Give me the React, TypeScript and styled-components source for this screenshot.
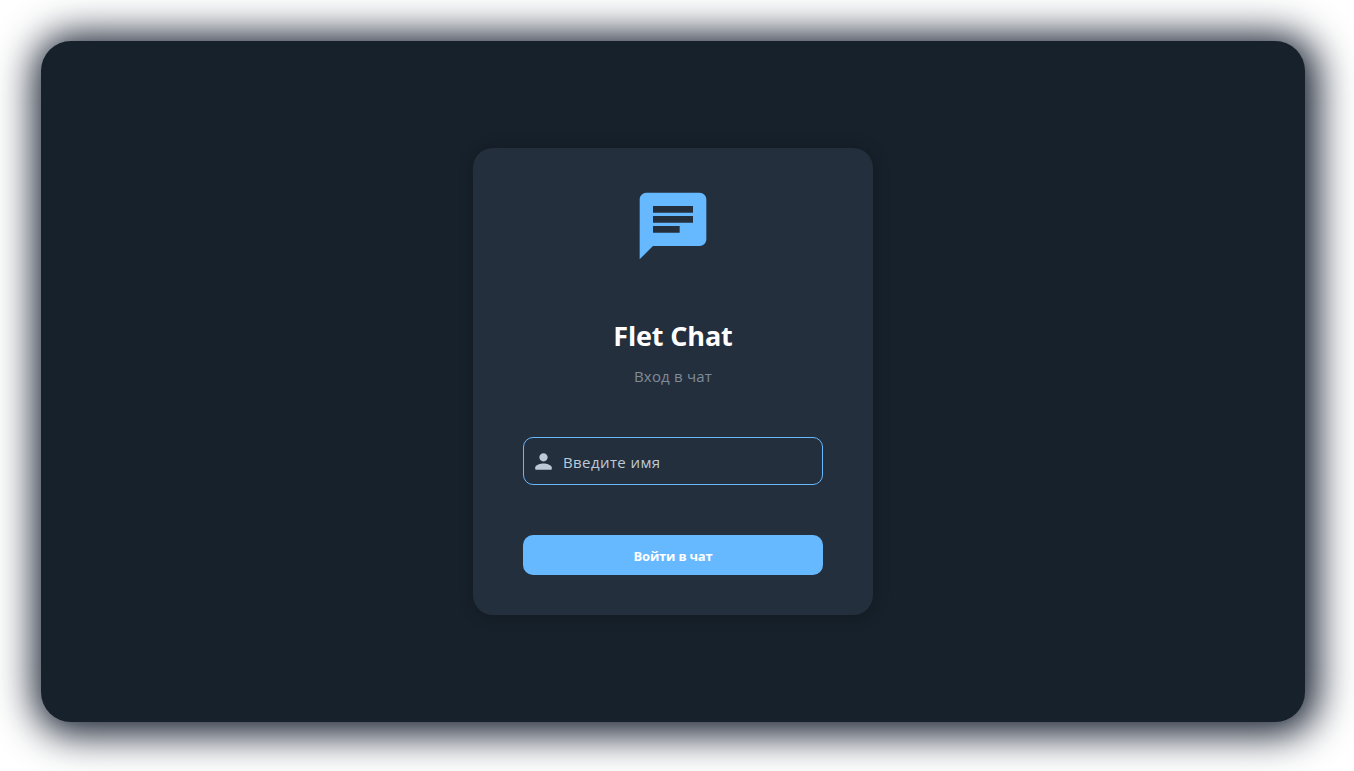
import React from 'react';
import styled, { createGlobalStyle } from 'styled-components';

const GlobalStyle = createGlobalStyle`
  * { box-sizing: border-box; }
  body { margin: 0; background: #fff; font-family: "Open Sans", "Noto Sans", sans-serif; overflow: hidden; }
`;
const Page = styled.div`
  height: 771px;
  padding: 41px 49px 49px 41px;
`;
const Window = styled.main`
  height: 681px;
  border-radius: 30px;
  background: #17212b;
  box-shadow: 3px 3px 38px 10px #182131;
  display: flex;
  justify-content: center;
  align-items: center;
`;
const Card = styled.form`
  width: 400px;
  height: 467px;
  border-radius: 20px;
  background: #242f3d;
  box-shadow: 1px 1px 14px 3px rgba(0, 0, 0, 0.16);
  padding: 38px 50px 40px;
  display: flex;
  flex-direction: column;
  align-items: center;
`;
const Logo = styled.svg`
  width: 80px;
  height: 80px;
  fill: #66b8ff;
`;
const Title = styled.h1`
  margin: 50px 0 0;
  color: #fff;
  font-size: 27px;
  line-height: 40px;
  font-weight: 700;
  letter-spacing: -0.15px;
`;
const Subtitle = styled.p`
  margin: 8px 0 0;
  color: #7f8b99;
  font-size: 15px;
  line-height: 24px;
  letter-spacing: 0.2px;
`;
const Field = styled.label`
  width: 300px;
  height: 48px;
  margin-top: 49px;
  padding-left: 7px;
  border: 1px solid #66b8ff;
  border-radius: 10px;
  display: flex;
  align-items: center;
  gap: 7px;
  color: #bdc9d7;
`;
const Placeholder = styled.span`
  padding-top: 2px;
  font-size: 15px;
  letter-spacing: 0.4px;
`;
const Button = styled.button`
  width: 300px;
  height: 40px;
  margin-top: 50px;
  padding: 2px 0 0;
  border: 0;
  border-radius: 10px;
  background: #66b8ff;
  color: #fff;
  font: 700 13px "Open Sans", sans-serif;
  letter-spacing: -0.2px;
`;
export default function App() {
  return (
    <Page>
      <GlobalStyle />
      <Window>
        <Card>
          <Logo viewBox="0 0 24 24"><path d="M20 2H4c-1.1 0-1.99.9-1.99 2L2 22l4-4h14c1.1 0 2-.9 2-2V4c0-1.1-.9-2-2-2zM6 9h12v2H6V9zm8 5H6v-2h8v2zm4-6H6V6h12v2z" /></Logo>
          <Title>Flet Chat</Title>
          <Subtitle>Вход в чат</Subtitle>
          <Field>
            <svg width="25" height="25" viewBox="0 0 24 24" fill="currentColor"><path d="M12 12c2.21 0 4-1.79 4-4s-1.79-4-4-4-4 1.79-4 4 1.79 4 4 4zm0 2c-2.67 0-8 1.34-8 4v1c0 .55.45 1 1 1h14c.55 0 1-.45 1-1v-1c0-2.66-5.33-4-8-4z" /></svg>
            <Placeholder>Введите имя</Placeholder>
          </Field>
          <Button type="button">Войти в чат</Button>
        </Card>
      </Window>
    </Page>
  );
}
